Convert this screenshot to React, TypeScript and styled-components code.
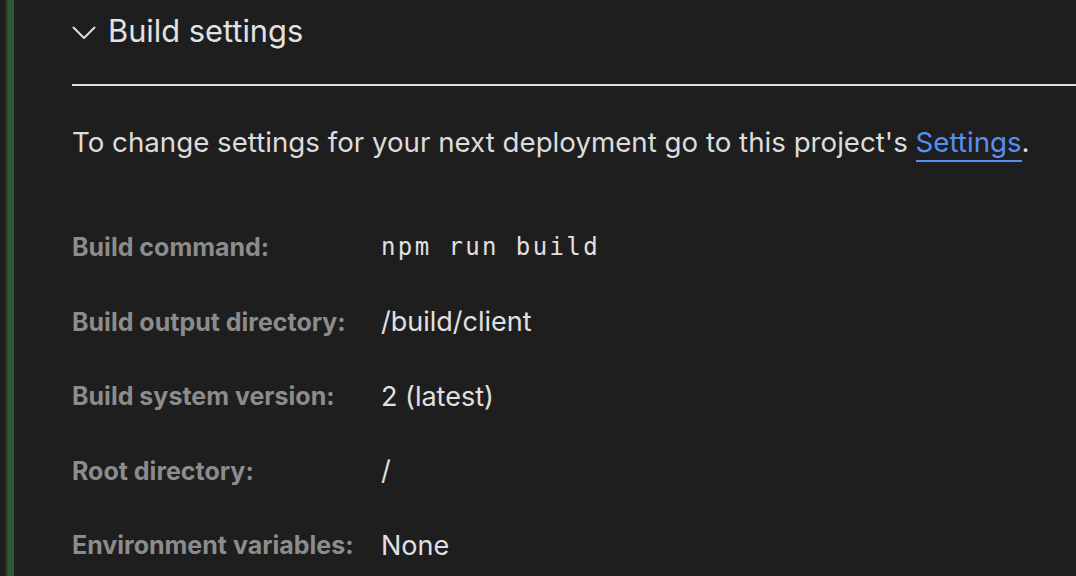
import React from 'react';
import styled, { createGlobalStyle } from 'styled-components';

const GlobalStyle = createGlobalStyle`
  html, body {
    margin: 0;
    padding: 0;
    background: #1e1e1e;
  }
  body {
    font-family: Inter, "Noto Sans", sans-serif;
    -webkit-font-smoothing: antialiased;
  }
`;

const Page = styled.div`
  display: flex;
  min-height: 100vh;
  background: #1e1e1e;
  overflow: hidden;
`;

const Rail = styled.div`
  flex: none;
  width: 6px;
  margin-left: 6px;
  border-left: 2px solid #3a3a3a;
  background: #2c5a34;
`;

const Content = styled.div`
  flex: 1;
  padding-left: 58px;
  display: flex;
  flex-direction: column;
`;

const Header = styled.div`
  display: flex;
  align-items: flex-start;
  gap: 12px;
  height: 86px;
  box-sizing: border-box;
  padding-top: 12px;
  border-bottom: 2px solid #dedede;
`;

const Chevron = styled.svg`
  flex: none;
  width: 24px;
  height: 14px;
  margin-top: 14px;
  color: #dcdcdc;
`;

const Title = styled.h2`
  margin: 0;
  font-size: 30.8px;
  line-height: 37px;
  font-weight: 400;
  color: #e2e2e2;
`;

const Intro = styled.p`
  margin: 40px 0 51px;
  font-size: 27.7px;
  line-height: 33px;
  color: #dcdcdc;
  white-space: nowrap;
`;

const Link = styled.a`
  color: #5790f2;
  text-decoration: none;
  border-bottom: 2px solid #5790f2;
  padding-bottom: 1px;
`;

const Details = styled.dl`
  display: grid;
  grid-template-columns: 309px auto;
  grid-auto-rows: 74.5px;
  margin: 0;
  align-items: center;
`;

const Label = styled.dt`
  font-size: 25px;
  font-weight: 700;
  color: #8c8c8c;
  white-space: nowrap;
`;

const Value = styled.dd<{ mono?: boolean }>`
  margin: 0;
  color: #e0e0e0;
  font-size: ${p => (p.mono ? '24px' : '27px')};
  font-family: ${p => (p.mono ? '"DejaVu Sans Mono", monospace' : 'inherit')};
  letter-spacing: ${p => (p.mono ? '2.4px' : 'normal')};
  white-space: nowrap;
`;

const rows: { label: string; value: string; mono?: boolean }[] = [
  { label: 'Build command:', value: 'npm run build', mono: true },
  { label: 'Build output directory:', value: '/build/client' },
  { label: 'Build system version:', value: '2 (latest)' },
  { label: 'Root directory:', value: '/' },
  { label: 'Environment variables:', value: 'None' },
];

export default function App() {
  return (
    <>
      <GlobalStyle />
      <Page>
        <Rail />
        <Content>
          <Header>
            <Chevron viewBox="0 0 24 14" fill="none">
              <path d="M1.5 1.5 L12 12 L22.5 1.5" stroke="currentColor" strokeWidth="2" strokeLinecap="round" strokeLinejoin="round" />
            </Chevron>
            <Title>Build settings</Title>
          </Header>
          <Intro>
            To change settings for your next deployment go to this project's <Link href="#">Settings</Link>.
          </Intro>
          <Details>
            {rows.map(r => (
              <React.Fragment key={r.label}>
                <Label>{r.label}</Label>
                <Value mono={r.mono}>{r.value}</Value>
              </React.Fragment>
            ))}
          </Details>
        </Content>
      </Page>
    </>
  );
}
